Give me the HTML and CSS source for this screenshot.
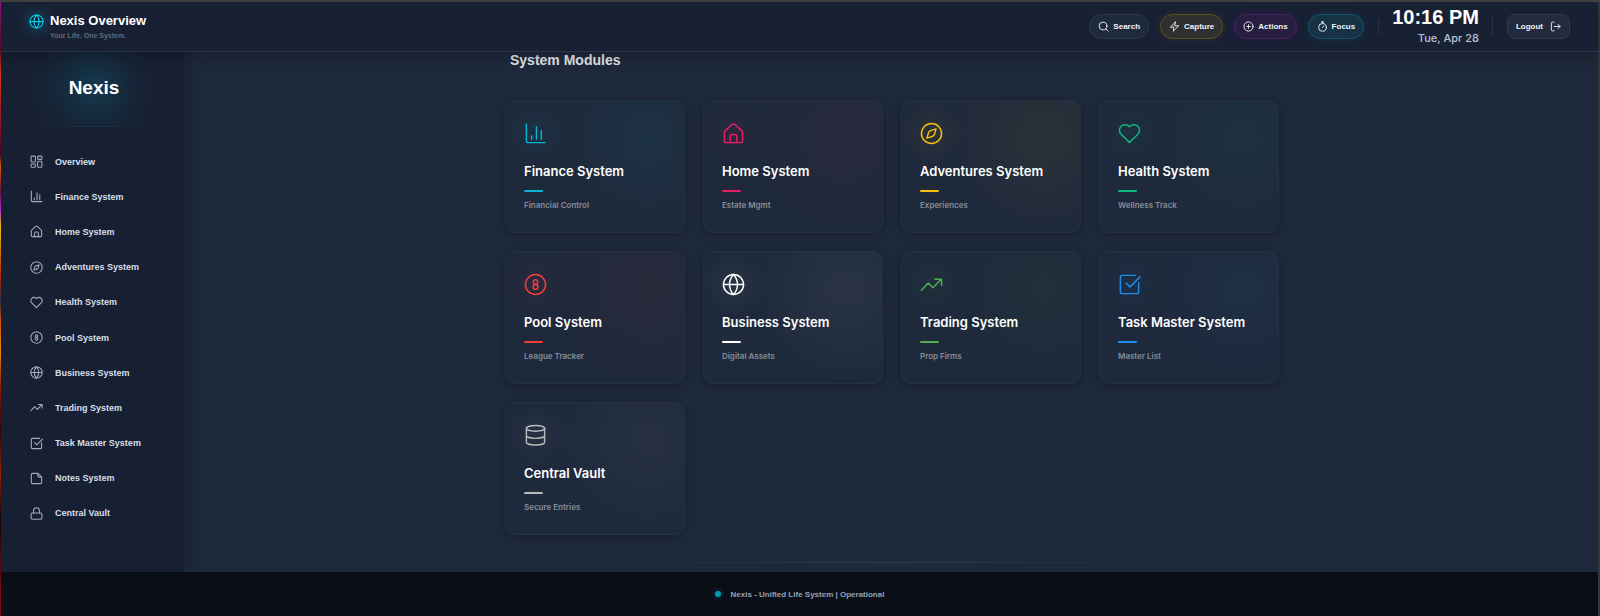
FILE: index.html
```
<!DOCTYPE html>
<html lang="en">
<head>
    <meta charset="UTF-8">
    <meta name="viewport" content="width=device-width, initial-scale=1.0">
    <title>Nexis Overview</title>
    <link rel="stylesheet" href="styles.css">
</head>
<body>
    <!-- Shared icon set -->
    <svg class="icon-defs" aria-hidden="true">
        <symbol id="i-grid" viewBox="0 0 24 24"><rect x="2" y="2" width="8" height="11" rx="1.500"/><rect x="14" y="2" width="8" height="6" rx="1.500"/><rect x="14" y="11.500" width="8" height="11" rx="1.500"/><rect x="2" y="16.500" width="8" height="6" rx="1.500"/></symbol>
        <symbol id="i-chart" viewBox="0 0 24 24"><path d="M2.500 2v17.500a2 2 0 0 0 2 2H22M8 18v-3.500M13 18V5M18 18V9"/></symbol>
        <symbol id="i-home" viewBox="0 0 24 24"><path d="M2.500 11a2.500 2.500 0 0 1 1-2l7-6.300a2.300 2.300 0 0 1 3 0l7 6.300a2.500 2.500 0 0 1 1 2v8.500a2 2 0 0 1-2 2h-15a2 2 0 0 1-2-2z"/><path d="M8.500 21.500V15a2 2 0 0 1 2-2h3a2 2 0 0 1 2 2v6.500"/></symbol>
        <symbol id="i-compass" viewBox="0 0 24 24"><circle cx="12" cy="12" r="10.500"/><path d="M16.800 7.200l-1.800 6-1.800 1.800-6 1.800 1.800-6L10.800 9z"/></symbol>
        <symbol id="i-heart" viewBox="0 0 24 24"><path d="M12 21.500l-8.700-8.800a5.600 5.600 0 0 1 0-8.200 5.900 5.900 0 0 1 8.200 0l.5.500.5-.5a5.900 5.900 0 0 1 8.200 0 5.600 5.600 0 0 1 0 8.200z"/></symbol>
        <symbol id="i-ball" viewBox="0 0 24 24"><circle cx="12" cy="12" r="10.500"/><circle cx="12" cy="9.300" r="2.300"/><circle cx="12" cy="14.500" r="2.500"/></symbol>
        <symbol id="i-globe" viewBox="0 0 24 24"><circle cx="12" cy="12" r="10.500"/><path d="M1.500 12h21M12 1.500a16 16 0 0 1 4.200 10.500A16 16 0 0 1 12 22.500 16 16 0 0 1 7.800 12 16 16 0 0 1 12 1.500z"/></symbol>
        <symbol id="i-trend" viewBox="0 0 24 24"><path d="M1.500 18l7-7.500 5 5L22 6.500M15.500 6.500H22.500V13"/></symbol>
        <symbol id="i-task" viewBox="0 0 24 24"><path d="M18 2.500H4.500a2 2 0 0 0-2 2v15a2 2 0 0 0 2 2h15a2 2 0 0 0 2-2V10M8.500 10.500l4 4L23 4"/></symbol>
        <symbol id="i-note" viewBox="0 0 24 24"><path d="M14.500 2.500H4.500a2 2 0 0 0-2 2v15a2 2 0 0 0 2 2h15a2 2 0 0 0 2-2v-10zM14.500 2.500V7.500a2 2 0 0 0 2 2h5"/></symbol>
        <symbol id="i-lock" viewBox="0 0 24 24"><rect x="2" y="11" width="20" height="11.500" rx="2.500"/><path d="M6.500 11V7a5.500 5.500 0 0 1 11 0v4"/></symbol>
        <symbol id="i-database" viewBox="0 0 24 24"><ellipse cx="12" cy="4.500" rx="9.500" ry="3"/><path d="M2.500 4.500v14.500c0 1.700 4.300 3 9.500 3s9.500-1.300 9.500-3V4.500M2.500 12c0 1.700 4.300 3 9.500 3s9.500-1.300 9.500-3"/></symbol>
        <symbol id="i-search" viewBox="0 0 24 24"><circle cx="11" cy="11" r="8.500"/><path d="M17.500 17.500L22 22"/></symbol>
        <symbol id="i-bolt" viewBox="0 0 24 24"><path d="M14 2L3 13.500h7.500L9.500 22 21 10.500h-8z"/></symbol>
        <symbol id="i-plus" viewBox="0 0 24 24"><circle cx="12" cy="12" r="10"/><path d="M12 8v8M8 12h8"/></symbol>
        <symbol id="i-timer" viewBox="0 0 24 24"><circle cx="12" cy="14" r="8.500"/><path d="M9.500 2h5M12 14l3-3.500M12 2v3"/></symbol>
        <symbol id="i-logout" viewBox="0 0 24 24"><path d="M9 2.500H5a2 2 0 0 0-2 2v15a2 2 0 0 0 2 2h4M9 12h13M17 7l5 5-5 5"/></symbol>
    </svg>

    <div class="app">
        <header class="topbar">
            <div class="brand">
                <svg class="brand-icon"><use href="#i-globe"/></svg>
                <div>
                    <h1 class="brand-title">Nexis Overview</h1>
                    <p class="brand-tagline">Your Life. One System.</p>
                </div>
            </div>
            <div class="actions">
                <button type="button" class="pill"><svg class="icon"><use href="#i-search"/></svg>Search</button>
                <button type="button" class="pill pill-capture"><svg class="icon"><use href="#i-bolt"/></svg>Capture</button>
                <button type="button" class="pill pill-actions"><svg class="icon"><use href="#i-plus"/></svg>Actions</button>
                <button type="button" class="pill pill-focus"><svg class="icon"><use href="#i-timer"/></svg>Focus</button>
            </div>
            <div class="clock">
                <div class="clock-time">10:16 PM</div>
                <div class="clock-date">Tue, Apr 28</div>
            </div>
            <button type="button" class="logout">Logout<svg class="icon"><use href="#i-logout"/></svg></button>
        </header>

        <div class="body">
            <aside class="sidebar">
                <div class="logo">Nexis</div>
                <nav class="nav">
                    <a href="#overview" class="nav-link"><svg class="icon"><use href="#i-grid"/></svg>Overview</a>
                    <a href="#finance" class="nav-link"><svg class="icon"><use href="#i-chart"/></svg>Finance System</a>
                    <a href="#home" class="nav-link"><svg class="icon"><use href="#i-home"/></svg>Home System</a>
                    <a href="#adventures" class="nav-link"><svg class="icon"><use href="#i-compass"/></svg>Adventures System</a>
                    <a href="#health" class="nav-link"><svg class="icon"><use href="#i-heart"/></svg>Health System</a>
                    <a href="#pool" class="nav-link"><svg class="icon"><use href="#i-ball"/></svg>Pool System</a>
                    <a href="#business" class="nav-link"><svg class="icon"><use href="#i-globe"/></svg>Business System</a>
                    <a href="#trading" class="nav-link"><svg class="icon"><use href="#i-trend"/></svg>Trading System</a>
                    <a href="#tasks" class="nav-link"><svg class="icon"><use href="#i-task"/></svg>Task Master System</a>
                    <a href="#notes" class="nav-link"><svg class="icon"><use href="#i-note"/></svg>Notes System</a>
                    <a href="#vault" class="nav-link"><svg class="icon"><use href="#i-lock"/></svg>Central Vault</a>
                </nav>
            </aside>

            <main class="main">
                <section class="modules">
                    <h2 class="modules-title">System Modules</h2>
                    <div class="grid">
                        <a href="#finance" class="card card-cyan"><svg class="card-icon"><use href="#i-chart"/></svg><h3 class="card-title">Finance System</h3><p class="card-text">Financial Control</p></a>
                        <a href="#home" class="card card-pink"><svg class="card-icon"><use href="#i-home"/></svg><h3 class="card-title">Home System</h3><p class="card-text">Estate Mgmt</p></a>
                        <a href="#adventures" class="card card-amber"><svg class="card-icon"><use href="#i-compass"/></svg><h3 class="card-title">Adventures System</h3><p class="card-text">Experiences</p></a>
                        <a href="#health" class="card card-emerald"><svg class="card-icon"><use href="#i-heart"/></svg><h3 class="card-title">Health System</h3><p class="card-text">Wellness Track</p></a>
                        <a href="#pool" class="card card-red"><svg class="card-icon"><use href="#i-ball"/></svg><h3 class="card-title">Pool System</h3><p class="card-text">League Tracker</p></a>
                        <a href="#business" class="card card-white"><svg class="card-icon"><use href="#i-globe"/></svg><h3 class="card-title">Business System</h3><p class="card-text">Digital Assets</p></a>
                        <a href="#trading" class="card card-green"><svg class="card-icon"><use href="#i-trend"/></svg><h3 class="card-title">Trading System</h3><p class="card-text">Prop Firms</p></a>
                        <a href="#tasks" class="card card-blue"><svg class="card-icon"><use href="#i-task"/></svg><h3 class="card-title">Task Master System</h3><p class="card-text">Master List</p></a>
                        <a href="#vault" class="card card-gray"><svg class="card-icon"><use href="#i-database"/></svg><h3 class="card-title">Central Vault</h3><p class="card-text">Secure Entries</p></a>
                    </div>
                    <hr class="divider">
                </section>
            </main>
        </div>

        <footer class="footer">
            <span class="status-dot"></span>
            <span>Nexis - Unified Life System | Operational</span>
        </footer>
    </div>
</body>
</html>
```
FILE: styles.css
```
* {
    box-sizing: border-box;
}
body {
    margin: 0;
    min-height: 100vh;
    padding: 2px 2px 0 1px;
    font-family: "Liberation Sans", Arial, sans-serif;
    color: #fff;
    background:
        linear-gradient(#444, #444) top / 100% 2px no-repeat,
        linear-gradient(#a0188c, #6a0a2c 8%, #e0401a 12%, #8a0c30 22%, #3c0420 25%, #f06010 27%, #70103c 31%, #c030e0 34%, #ffd010 37%, #c02808 45%, #303848 49%, #e05808 52%, #ff9010 57%, #a01808 63%, #300408 70%, #a82408 77%, #140408 84%, #780c10 95%) left / 2px 100% no-repeat,
        #35373b;
}
h1, h2, h3, p {
    margin: 0;
}
a {
    color: inherit;
    text-decoration: none;
}
svg {
    fill: none;
    stroke: currentColor;
    stroke-width: 1.5;
    stroke-linecap: round;
    stroke-linejoin: round;
    flex-shrink: 0;
}
.icon-defs {
    display: none;
}
.icon {
    width: 11px;
    height: 11px;
    stroke-width: 2;
}
.app {
    display: flex;
    flex-direction: column;
    min-height: calc(100vh - 2px);
    background: #1e293b;
}

/* Top bar */
.topbar {
    display: flex;
    align-items: center;
    height: 50px;
    padding: 0 28px;
    background: #182033;
    border-bottom: 1px solid #2a3546;
    box-shadow: 0 4px 16px rgba(0, 0, 0, 0.25);
    position: relative;
    z-index: 2;
}
.brand {
    display: flex;
    gap: 6px;
    margin-right: auto;
}
.brand-icon {
    width: 15px;
    height: 15px;
    color: #06cdea;
    stroke-width: 2;
    border-radius: 50%;
    box-shadow: 0 0 12px 2px rgba(6, 182, 212, 0.3);
}
.brand-title {
    font-size: 13px;
    line-height: 14px;
}
.brand-tagline {
    margin-top: 4px;
    font-size: 7px;
    line-height: 8px;
    font-weight: bold;
    color: #626b7c;
}
.actions {
    display: flex;
    gap: 11px;
    padding-right: 14px;
}
.pill,
.logout {
    display: flex;
    align-items: center;
    justify-content: center;
    gap: 4px;
    height: 25px;
    padding: 0 8px;
    font: bold 8px "Liberation Sans", Arial, sans-serif;
    color: #f1f5f9;
    background: #1f2b3d;
    border: 1px solid #2e3a4c;
    border-radius: 13px;
    cursor: pointer;
}
.pill-capture {
    background: #2f302f;
    border-color: #5d4f22;
    box-shadow: 0 0 8px rgba(234, 179, 8, 0.1);
}
.pill-actions {
    background: #281f40;
    border-color: #46225e;
    box-shadow: 0 0 8px rgba(168, 33, 247, 0.1);
}
.pill-focus {
    background: #163244;
    border-color: #14566a;
    box-shadow: 0 0 8px rgba(6, 182, 212, 0.12);
}
.clock {
    padding: 0 14px;
    text-align: right;
    background:
        linear-gradient(#2a3346, #2a3346) left / 1px 16px no-repeat,
        linear-gradient(#2a3346, #2a3346) right / 1px 20px no-repeat;
}
.clock-time {
    font-size: 20px;
    line-height: 22px;
    font-weight: bold;
}
.clock-date {
    font-family: Inter, sans-serif;
    font-size: 11px;
    line-height: 20px;
    font-weight: 500;
    color: #b9c3d3;
}
.logout {
    gap: 7px;
    margin-left: 14px;
    background: #232a3d;
    border-color: #333a4c;
    border-radius: 8px;
}

/* Sidebar */
.body {
    display: flex;
    flex: 1;
}
.sidebar {
    display: flex;
    flex-direction: column;
    width: 185px;
    background: #172032;
    border-right: 1px solid #202b3d;
    box-shadow: 2px 0 12px rgba(0, 0, 0, 0.2);
}
.logo {
    height: 75px;
    padding: 24px 0 0 2px;
    font-size: 19px;
    line-height: 24px;
    font-weight: bold;
    text-align: center;
    background:
        linear-gradient(90deg, transparent 10%, #232f42 50%, transparent 90%) bottom / 100% 1px no-repeat,
        radial-gradient(circle at 50% 46%, #143b4f, rgba(20, 52, 72, 0.7) 22px, rgba(20, 52, 72, 0.2) 44px, transparent 64px);
}
.nav {
    display: flex;
    flex-direction: column;
    flex: 1;
    padding: 17px 0 41px 29px;
}
.nav-link {
    display: flex;
    align-items: center;
    gap: 12px;
    flex: 1;
    font-size: 9px;
    font-weight: bold;
    color: #d6dfea;
}
.nav-link .icon {
    width: 13px;
    height: 13px;
    color: #a1abbb;
}

/* Modules */
.main {
    flex: 1;
    padding: 0 20px;
}
.modules {
    max-width: 774px;
    margin: 0 auto;
}
.modules-title {
    padding-left: 5px;
    font-size: 14px;
    line-height: 16px;
    color: #e2e4e8;
}
.grid {
    display: grid;
    grid-template-columns: repeat(4, 1fr);
    gap: 18px;
    margin-top: 32px;
}
.card {
    --accent: #06b6d4;
    --glow: rgba(6, 182, 212, 0.06);
    padding: 21px 18px;
    font-family: Inter, sans-serif;
    background:
        radial-gradient(circle at 30px 32px, var(--glow), transparent 32px),
        radial-gradient(circle at 80% 28%, var(--glow), transparent 96px),
        #1e293b;
    border: 1px solid #253143;
    border-radius: 10px;
    box-shadow: 0 2px 10px rgba(0, 0, 0, 0.25);
}
.card-icon {
    display: block;
    width: 23px;
    height: 23px;
    color: var(--accent);
}
.card-title {
    margin-top: 16px;
    font-size: 13px;
    line-height: 20px;
    font-weight: 600;
}
.card-title::after {
    content: "";
    display: block;
    width: 19px;
    height: 2px;
    margin-top: 9px;
    border-radius: 1px;
    background: var(--accent);
    box-shadow: 0 0 6px 1px var(--glow);
}
.card-text {
    margin-top: 7px;
    font-size: 8px;
    line-height: 12px;
    font-weight: 600;
    color: #868d99;
}
.card-pink {
    --accent: #e91e63;
    --glow: rgba(233, 30, 99, 0.05);
}
.card-amber {
    --accent: #fbbf0a;
    --glow: rgba(251, 191, 10, 0.06);
}
.card-emerald {
    --accent: #10b981;
    --glow: rgba(16, 185, 129, 0.06);
}
.card-red {
    --accent: #f03e3e;
    --glow: rgba(240, 62, 62, 0.05);
}
.card-white {
    --accent: #fff;
    --glow: rgba(255, 255, 255, 0.05);
}
.card-green {
    --accent: #4caf50;
    --glow: rgba(76, 175, 80, 0.05);
}
.card-blue {
    --accent: #2090f0;
    --glow: rgba(32, 144, 240, 0.06);
}
.card-gray {
    --accent: #b8babd;
    --glow: rgba(190, 190, 190, 0.05);
}
.divider {
    height: 1px;
    margin: 27px 0 9px;
    border: 0;
    background: linear-gradient(90deg, transparent 10%, #2e3b4c 50%, transparent 90%);
}

/* Footer */
.footer {
    display: flex;
    align-items: center;
    justify-content: center;
    gap: 10px;
    height: 44px;
    background: #0a0e17;
    font-size: 8px;
    font-weight: bold;
    color: #94a3b8;
}
.status-dot {
    width: 6px;
    height: 6px;
    border-radius: 50%;
    background: #0698b0;
    box-shadow: 0 0 5px rgba(6, 182, 212, 0.5);
}
```
